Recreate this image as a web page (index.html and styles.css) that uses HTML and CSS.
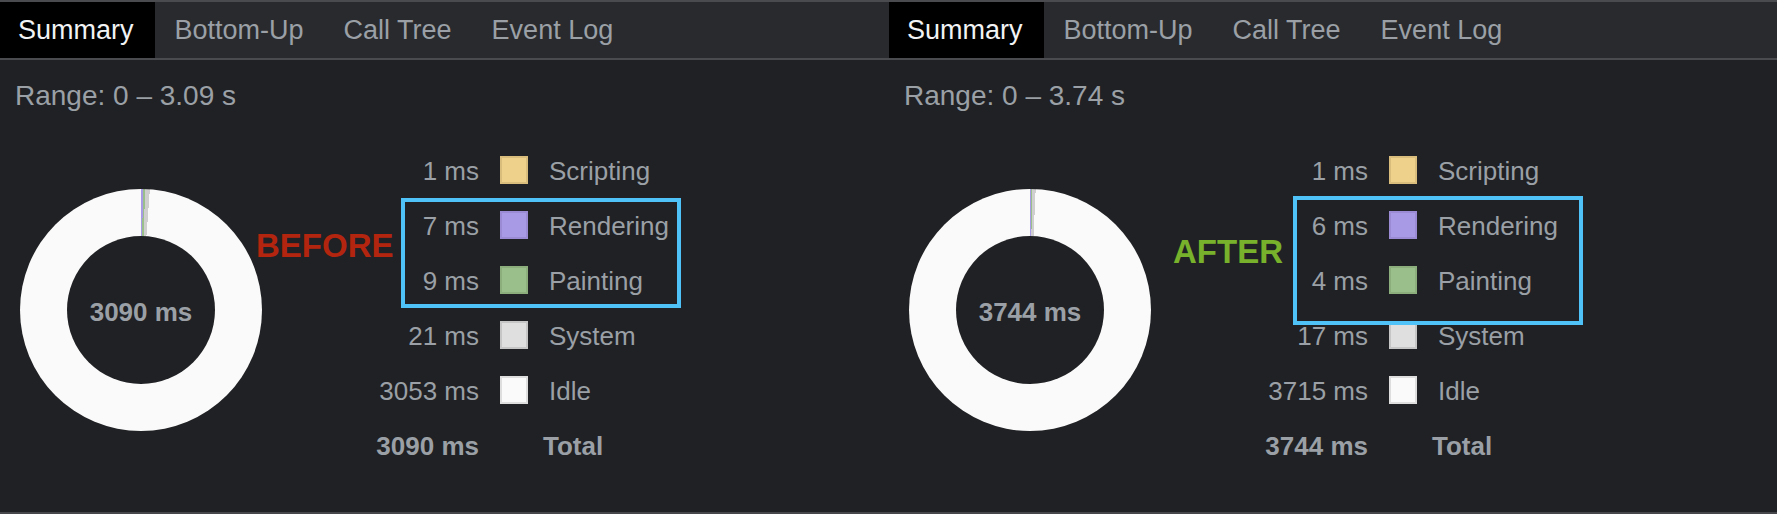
FILE: index.html
```html
<!DOCTYPE html>
<html>
<head>
  <title>Performance Summary</title>
  <link rel="stylesheet" href="styles.css">
</head>
<body>
  <div class="screen">

    <!-- Before -->
    <div class="panel panel-left">
      <div class="tabs">
        <div class="tab active">Summary</div>
        <div class="tab">Bottom-Up</div>
        <div class="tab">Call Tree</div>
        <div class="tab">Event Log</div>
      </div>
      <div class="range">Range: 0 – 3.09 s</div>
      <div class="chart">
        <div class="donut donut-before">
          <div class="donut-hole">3090 ms</div>
        </div>
        <div class="legend">
          <span class="value">1 ms</span><span class="swatch scripting"></span><span class="label">Scripting</span>
          <span class="value">7 ms</span><span class="swatch rendering"></span><span class="label">Rendering</span>
          <span class="value">9 ms</span><span class="swatch painting"></span><span class="label">Painting</span>
          <span class="value">21 ms</span><span class="swatch system"></span><span class="label">System</span>
          <span class="value">3053 ms</span><span class="swatch idle"></span><span class="label">Idle</span>
          <span class="value total">3090 ms</span><span></span><span class="label total">Total</span>
        </div>
      </div>
      <div class="tag tag-before">BEFORE</div>
      <div class="highlight highlight-before"></div>
    </div>

    <!-- After -->
    <div class="panel panel-right">
      <div class="tabs">
        <div class="tab active">Summary</div>
        <div class="tab">Bottom-Up</div>
        <div class="tab">Call Tree</div>
        <div class="tab">Event Log</div>
      </div>
      <div class="range">Range: 0 – 3.74 s</div>
      <div class="chart">
        <div class="donut donut-after">
          <div class="donut-hole">3744 ms</div>
        </div>
        <div class="legend">
          <span class="value">1 ms</span><span class="swatch scripting"></span><span class="label">Scripting</span>
          <span class="value">6 ms</span><span class="swatch rendering"></span><span class="label">Rendering</span>
          <span class="value">4 ms</span><span class="swatch painting"></span><span class="label">Painting</span>
          <span class="value">17 ms</span><span class="swatch system"></span><span class="label">System</span>
          <span class="value">3715 ms</span><span class="swatch idle"></span><span class="label">Idle</span>
          <span class="value total">3744 ms</span><span></span><span class="label total">Total</span>
        </div>
      </div>
      <div class="tag tag-after">AFTER</div>
      <div class="highlight highlight-after"></div>
    </div>

  </div>
</body>
</html>
```

FILE: styles.css
```css
:root {
  --background: #202124;
  --tabbar: #292a2d;
  --line: #4a4b4f;
  --text: #9aa0a6;
  --text-active: #f1f3f4;
  --scripting: #eed18a;
  --scripting-border: #d8bd7c;
  --rendering: #a99ae6;
  --rendering-border: #9a8bd4;
  --painting: #9bbf8b;
  --painting-border: #8cae7d;
  --system: #dfdfdf;
  --system-border: #c6c6c6;
  --idle: #fafafa;
  --idle-border: #dedede;
  --highlight: #4fc3f7;
}

body {
  margin: 0;
  font-family: "Liberation Sans", Arial, sans-serif;
  color: var(--text);
  background: var(--background);
}

.screen {
  display: flex;
  height: 514px;
  box-sizing: border-box;
  border-bottom: 2px solid #46474b;
  overflow: hidden;
}

.panel {
  position: relative;
  display: flex;
  flex-direction: column;
}

.panel-left {
  width: 889px;
}

.panel-right {
  flex: 1;
}

.tabs {
  display: flex;
  height: 56px;
  background: var(--tabbar);
  border-top: 2px solid var(--line);
  border-bottom: 2px solid var(--line);
}

.tab {
  padding: 0 20px;
  font-size: 27px;
  line-height: 56px;
  color: var(--text);
}

.tab.active {
  padding: 0 21px 0 18px;
  background: #000;
  color: var(--text-active);
}

.range {
  padding: 20px 15px 0;
  font-size: 28px;
  line-height: 32px;
}

.chart {
  display: flex;
  align-items: center;
  margin-top: 30px;
  padding-left: 20px;
}

.donut {
  width: 242px;
  height: 242px;
  margin-top: 6px;
  border-radius: 50%;
  display: flex;
  align-items: center;
  justify-content: center;
}

.donut-before {
  background: conic-gradient(
    var(--scripting) 0 0.12deg,
    var(--rendering) 0.12deg 0.93deg,
    var(--painting) 0.93deg 1.98deg,
    #cfcfcf 1.98deg 4.2deg,
    var(--idle) 4.2deg
  );
}

.donut-after {
  background: conic-gradient(
    var(--scripting) 0 0.1deg,
    var(--rendering) 0.1deg 0.67deg,
    var(--painting) 0.67deg 1.06deg,
    #cfcfcf 1.06deg 2.7deg,
    var(--idle) 2.7deg
  );
}

.donut-hole {
  width: 148px;
  height: 148px;
  border-radius: 50%;
  background: var(--background);
  display: flex;
  align-items: center;
  justify-content: center;
  font-size: 26px;
  font-weight: 700;
  padding-top: 4px;
  box-sizing: border-box;
}

.legend {
  display: grid;
  grid-template-columns: 110px 28px auto;
  grid-auto-rows: 55px;
  column-gap: 21px;
  align-items: center;
  margin-left: 107px;
  font-size: 26px;
}

.value {
  text-align: right;
  padding-top: 4px;
}

.label {
  padding-top: 4px;
}

.total {
  font-weight: 700;
}

.label.total {
  margin-left: -6px;
}

.swatch {
  width: 28px;
  height: 28px;
  box-sizing: border-box;
  border: 2px solid;
}

.swatch.scripting { background: var(--scripting); border-color: var(--scripting-border); }
.swatch.rendering { background: var(--rendering); border-color: var(--rendering-border); }
.swatch.painting  { background: var(--painting);  border-color: var(--painting-border); }
.swatch.system    { background: var(--system);    border-color: var(--system-border); }
.swatch.idle      { background: var(--idle);      border-color: var(--idle-border); }

/* annotations drawn over the summary */
.tag {
  position: absolute;
  font-size: 33px;
  line-height: 33px;
  font-weight: 700;
}

.tag-before {
  left: 256px;
  top: 229px;
  color: #b3250f;
}

.tag-after {
  left: 284px;
  top: 235px;
  color: #78b12b;
}

.highlight {
  position: absolute;
  box-sizing: border-box;
  border: 4px solid var(--highlight);
}

.highlight-before {
  left: 401px;
  top: 198px;
  width: 280px;
  height: 110px;
}

.highlight-after {
  left: 404px;
  top: 196px;
  width: 290px;
  height: 129px;
}
```
